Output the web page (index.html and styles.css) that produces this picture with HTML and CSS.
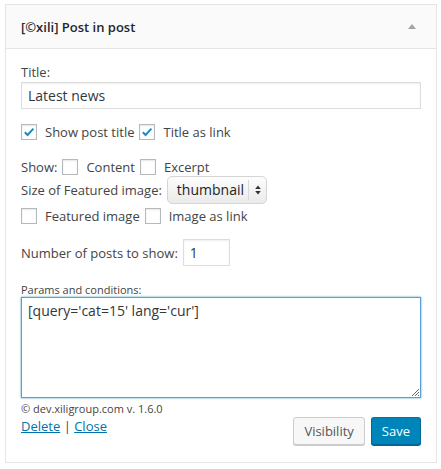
FILE: index.html
```html
<!DOCTYPE html>
<html>
<head>
<meta charset="utf-8">
<link rel="stylesheet" href="styles.css">
</head>
<body>
<div class="widget">
  <div class="widget-top">
    <h3 class="widget-title">[©xili] Post in post</h3>
    <span class="arrow"></span>
  </div>
  <div class="widget-inside">
    <p class="field">
      <label class="label">Title:</label>
      <input class="text-input" type="text" value="Latest news">
    </p>
    <p class="row check-row">
      <span class="cb checked"><svg viewBox="0 0 16 16" width="16" height="16"><path d="M3.8 8.2 L6.6 11 L12.4 4.6" fill="none" stroke="#1e8cbe" stroke-width="2"/></svg></span>
      <span class="cb-label">Show post title</span>
      <span class="cb checked"><svg viewBox="0 0 16 16" width="16" height="16"><path d="M3.8 8.2 L6.6 11 L12.4 4.6" fill="none" stroke="#1e8cbe" stroke-width="2"/></svg></span>
      <span class="cb-label">Title as link</span>
    </p>
    <p class="row show-row">
      <span class="plain">Show:</span>
      <span class="cb"></span>
      <span class="cb-label">Content</span>
      <span class="cb"></span>
      <span class="cb-label">Excerpt</span>
    </p>
    <p class="row size-row">
      <span class="plain">Size of Featured image:</span>
      <span class="select"><span class="select-text">thumbnail</span><span class="select-arrows"><svg viewBox="0 0 8 12" width="8" height="12"><path d="M4 1.5 L6.8 5 L1.2 5 Z M4 10.5 L6.8 7 L1.2 7 Z" fill="#333"/></svg></span></span>
    </p>
    <p class="row feat-row">
      <span class="cb"></span>
      <span class="cb-label">Featured image</span>
      <span class="cb"></span>
      <span class="cb-label">Image as link</span>
    </p>
    <p class="row num-row">
      <span class="plain">Number of posts to show:</span>
      <span class="num-input">1</span>
    </p>
    <p class="field params">
      <label class="small-label">Params and conditions:</label>
      <span class="textarea">[query='cat=15' lang='cur']<svg class="grip" viewBox="0 0 8 8" width="8" height="8"><path d="M1 8 L8 1 M4 8 L8 4 M7 8 L8 7" stroke="#555" stroke-width="0.9"/></svg></span>
    </p>
    <div class="footer">
      <div class="meta">
        <div class="copyright">© dev.xiligroup.com v. 1.6.0</div>
        <div class="links"><a class="link">Delete</a> | <a class="link">Close</a></div>
      </div>
      <div class="buttons">
        <span class="btn">Visibility</span>
        <span class="btn primary">Save</span>
      </div>
    </div>
  </div>
</div>
</body>
</html>
```

FILE: styles.css
```css
html, body {
  margin: 0;
  padding: 0;
  background: #fff;
}
body {
  font-family: "Open Sans", "Liberation Sans", sans-serif;
  font-size: 13px;
  color: #444;
  padding: 4px 5px 0 5px;
}
.widget {
  border: 1px solid #e5e5e5;
  box-sizing: border-box;
  width: 432px;
  height: 459px;
  background: #fff;
}
.widget-top {
  height: 43px;
  background: #fafafa;
  border-bottom: 1px solid #e5e5e5;
  display: flex;
  align-items: center;
  justify-content: space-between;
  padding: 0 20px 0 15px;
}
.widget-title {
  margin: 0;
  font-size: 13px;
  font-weight: 600;
  color: #23282d;
}
.arrow {
  width: 0;
  height: 0;
  border-left: 4px solid transparent;
  border-right: 4px solid transparent;
  border-bottom: 5px solid #a0a5aa;
}
.widget-inside {
  padding: 14px 15px 0 15px;
}
p { margin: 0; }
.field { display: flex; flex-direction: column; }
.label { line-height: 18px; height: 18px; }
.text-input {
  margin-top: 1px;
  height: 27px;
  box-sizing: border-box;
  border: 1px solid #ddd;
  box-shadow: inset 0 1px 2px rgba(0,0,0,.07);
  font-family: inherit;
  font-size: 14px;
  color: #32373c;
  padding: 0 6px;
  outline: none;
  width: 400px;
}
.row {
  display: flex;
  align-items: center;
}
.check-row { margin-top: 14px; height: 18px; }
.show-row { margin-top: 17px; height: 18px; }
.size-row { margin-top: 0; height: 28px; }
.feat-row { margin-top: 3px; height: 18px; }
.num-row { margin-top: 14px; height: 27px; }
.cb {
  width: 16px;
  height: 16px;
  box-sizing: border-box;
  border: 1px solid #b4b9be;
  box-shadow: inset 0 1px 2px rgba(0,0,0,.1);
  background: #fff;
  display: inline-flex;
  flex: none;
}
.cb svg { margin: -1px; }
.cb-label { margin: 0 5px 0 8px; }
.plain { margin-right: 5px; }
.select {
  display: inline-flex;
  align-items: center;
  height: 28px;
  box-sizing: border-box;
  border: 1px solid #d5d5d5;
  border-radius: 5px;
  background: linear-gradient(#fdfdfd, #eaeaea);
  padding-left: 9px;
}
.select-text {
  font-size: 14px;
  color: #222;
  padding-right: 4px;
  line-height: 26px;
}
.select-arrows {
  border-left: 1px solid #d8d8d8;
  height: 20px;
  display: inline-flex;
  align-items: center;
  padding: 0 4px 0 5px;
}
.num-input {
  margin-left: 0;
  width: 47px;
  height: 27px;
  box-sizing: border-box;
  border: 1px solid #ddd;
  box-shadow: inset 0 1px 2px rgba(0,0,0,.07);
  font-size: 14px;
  color: #32373c;
  padding-left: 6px;
  line-height: 25px;
}
.params { margin-top: 16px; }
.small-label { font-size: 11px; line-height: 15px; }
.textarea {
  position: relative;
  width: 400px;
  height: 101px;
  box-sizing: border-box;
  border: 1px solid #5b9dd9;
  box-shadow: 0 0 2px rgba(30,140,190,.8);
  font-size: 14px;
  color: #32373c;
  padding: 2px 6px;
  line-height: 22px;
}
.grip {
  position: absolute;
  right: 1px;
  bottom: 1px;
}
.footer {
  display: flex;
  justify-content: space-between;
  align-items: flex-start;
  margin-top: 3px;
}
.copyright { font-size: 11px; line-height: 16px; }
.links { font-size: 13px; line-height: 18px; }
.link { color: #0073aa; text-decoration: underline; }
.buttons {
  display: flex;
  gap: 6px;
  margin-top: 16px;
}
.btn {
  display: inline-flex;
  align-items: center;
  height: 28px;
  box-sizing: border-box;
  padding: 0 10px;
  border: 1px solid #ccc;
  border-radius: 3px;
  background: #f7f7f7;
  box-shadow: 0 1px 0 #ccc;
  color: #555;
  font-size: 13px;
}
.btn.primary {
  background: #0085ba;
  border-color: #0073aa #006799 #006799;
  box-shadow: 0 1px 0 #006799;
  color: #fff;
}
```
